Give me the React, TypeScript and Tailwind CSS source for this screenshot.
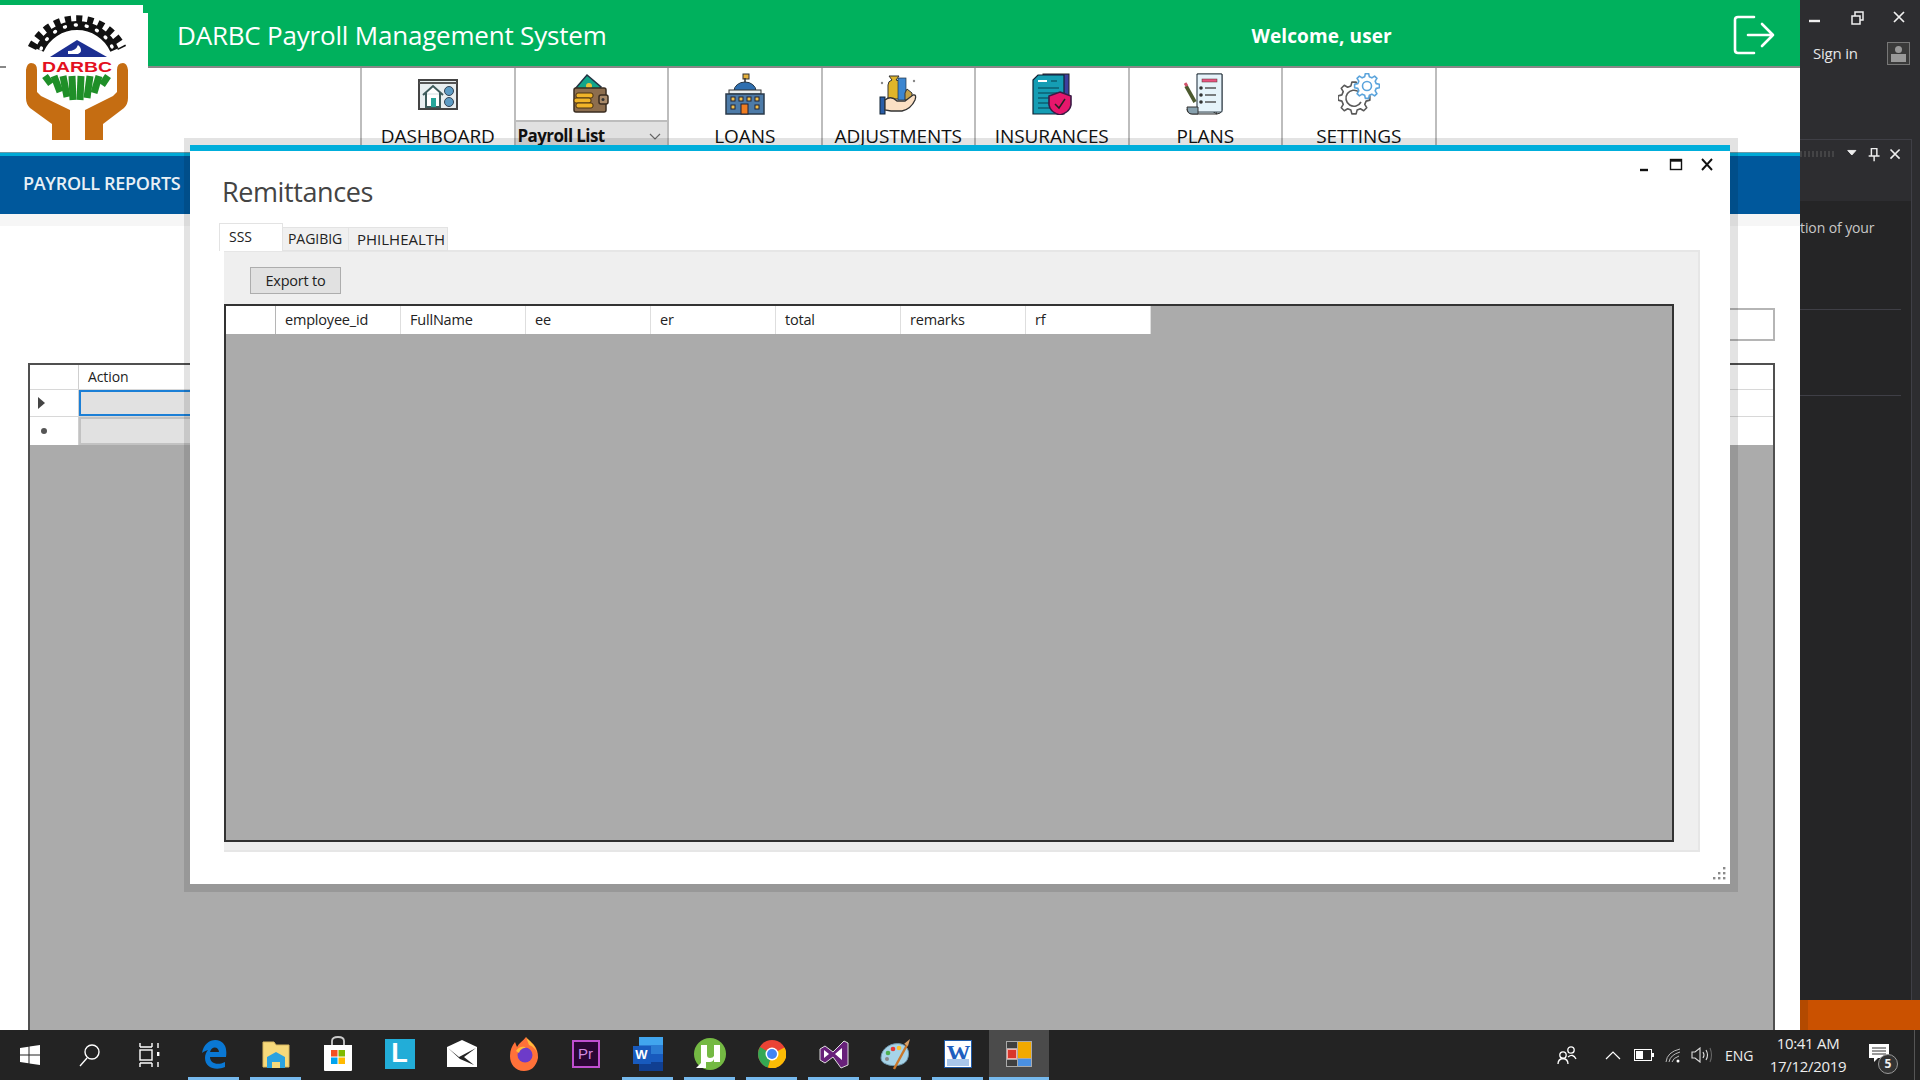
import React from "react";

const ui = "font-['Open_Sans',_'Noto_Sans',_sans-serif]";

// outline of a cog, used by the settings icon
function gearPath(cx: number, cy: number, R: number, r: number, n: number) {
    const pts: string[] = [];
    for (let i = 0; i < n; i++) {
        const step = (Math.PI * 2) / n;
        const a = i * step;
        const at = (rad: number, ang: number) => `${(cx + rad * Math.cos(ang)).toFixed(2)} ${(cy + rad * Math.sin(ang)).toFixed(2)}`;
        pts.push(at(r, a - step * 0.32), at(R, a - step * 0.17), at(R, a + step * 0.17), at(r, a + step * 0.32));
    }
    return "M" + pts.join(" L") + " Z";
}

function Logo() {
    return (
        <svg width="148" height="150" viewBox="0 0 148 150" className="block">
            <path d="M32 48 A50 50 0 0 1 122 48" fill="none" stroke="#111" strokeWidth="9" strokeDasharray="6 5" />
            <path d="M39.5 50 A41 41 0 0 1 114.5 50" fill="none" stroke="#111" strokeWidth="9" />
            <path d="M41 49 A39 39 0 0 1 113 49" fill="none" stroke="#fff" strokeWidth="3.4" strokeLinecap="round" strokeDasharray="1 10" />
            <path d="M50 57 L77 40 L107 57 Z" fill="#1c2f92" />
            <path d="M68 51 Q76 51 78 45 L80 47 Q83 52 78 54 L68 54 Z" fill="#fff" />
            <text x="77" y="72" textAnchor="middle" fontFamily="Liberation Sans" fontWeight="700" fontSize="14.5" textLength="70" lengthAdjust="spacingAndGlyphs" fill="#e3101e">
                DARBC
            </text>
            <g fill="none" stroke="#1f8f28" strokeWidth="7">
                <path d="M45 76 L51 84" />
                <path d="M54 76 L60 92" />
                <path d="M63 76 L67 97" />
                <path d="M72 76 L73 100" />
                <path d="M81 76 L80 100" />
                <path d="M90 76 L87 98" />
                <path d="M99 76 L94 93" />
                <path d="M108 76 L102 85" />
            </g>
            <path d="M26 70 Q27 63 31 63 Q37 63 37 70 L37 92 L41 96 L70 110 L70 140 L52 140 L52 124 L30 108 Q26 104 26 98 Z" fill="#c56d12" />
            <path d="M128 70 Q127 63 123 63 Q117 63 117 70 L117 92 L113 96 L85 110 L85 140 L103 140 L103 124 L124 108 Q128 104 128 98 Z" fill="#c56d12" />
        </svg>
    );
}

function DashboardIcon() {
    return (
        <svg width="40" height="42" viewBox="0 0 40 42">
            <rect x="1" y="7" width="38" height="29" fill="#e8eef0" stroke="#444" strokeWidth="2" />
            <path d="M1 10 H39" stroke="#555" strokeWidth="2" />
            <path d="M5 22 L15 13 L25 22 M8 20 V34 H22 V20" fill="#fff" stroke="#3d5a5a" strokeWidth="2" />
            <rect x="13" y="25" width="5" height="9" fill="#26a69a" />
            <circle cx="31" cy="18" r="4.5" fill="#5c9bc4" stroke="#345" strokeWidth="1" />
            <circle cx="31" cy="29" r="4.5" fill="#5c9bc4" stroke="#345" strokeWidth="1" />
        </svg>
    );
}

function WalletIcon() {
    return (
        <svg width="40" height="42" viewBox="0 0 40 42">
            <path d="M4 16 L16 2 L30 14 L26 20 H6 Z" fill="#12a58a" stroke="#234" strokeWidth="1.5" />
            <circle cx="18" cy="13" r="3" fill="#e8c23a" />
            <rect x="3" y="15" width="32" height="24" rx="2" fill="#8d6e4e" stroke="#3a2c20" strokeWidth="1.5" />
            <rect x="28" y="22" width="9" height="9" rx="2" fill="#a98a6a" stroke="#3a2c20" strokeWidth="1.5" />
            <circle cx="32" cy="26.5" r="1.5" fill="#333" />
            <rect x="5" y="20" width="17" height="5" rx="2" fill="#f0b429" stroke="#4a3212" />
            <rect x="3" y="25" width="17" height="5" rx="2" fill="#f0b429" stroke="#4a3212" />
            <rect x="5" y="30" width="17" height="5" rx="2" fill="#f0b429" stroke="#4a3212" />
        </svg>
    );
}

function LoansIcon() {
    return (
        <svg width="42" height="42" viewBox="0 0 42 42">
            <rect x="19" y="1" width="6" height="5" fill="#e6b13c" stroke="#333" />
            <path d="M21 5 V10" stroke="#333" strokeWidth="1.5" />
            <path d="M10 18 A11 9 0 0 1 32 18 Z" fill="#2f6fb0" stroke="#234" />
            <rect x="5" y="17" width="32" height="4" fill="#e8edf0" stroke="#333" />
            <rect x="2" y="21" width="38" height="20" fill="#4d7ba8" stroke="#2a3a4a" strokeWidth="1.5" />
            <g fill="#f1c04c" stroke="#223">
                <rect x="7" y="24" width="4" height="4" />
                <rect x="15" y="24" width="4" height="4" />
                <rect x="23" y="24" width="4" height="4" />
                <rect x="31" y="24" width="4" height="4" />
                <rect x="7" y="32" width="4" height="4" />
                <rect x="31" y="32" width="4" height="4" />
            </g>
            <rect x="17" y="31" width="7" height="10" fill="#ef7d22" stroke="#223" />
        </svg>
    );
}

function AdjustmentsIcon() {
    return (
        <svg width="40" height="42" viewBox="0 0 40 42">
            <path d="M10 26 V12 Q10 8 14 7 L11 3 H21 L18 7 Q23 8 23 12 V26 Z" fill="#e0b52a" stroke="#333" />
            <rect x="20" y="5" width="8" height="22" fill="#3c86d0" stroke="#234" strokeWidth="0.7" />
            <path d="M29 16 L34 20 V27 H27 V20 Z" fill="#c7a247" stroke="#333" />
            <circle cx="4" cy="10" r="1.2" fill="#888" />
            <circle cx="36" cy="8" r="1.2" fill="#888" />
            <rect x="2" y="24" width="5" height="17" fill="#2a5ea8" stroke="#123" />
            <path d="M7 27 Q13 22 19 28 H27 L35 22 Q39 21 37 27 Q33 36 24 38 H13 L7 37 Z" fill="#fbe0c4" stroke="#333" strokeWidth="1.3" />
        </svg>
    );
}

function InsurancesIcon() {
    return (
        <svg width="42" height="42" viewBox="0 0 42 42">
            <rect x="12" y="1" width="26" height="34" fill="#3d3f9e" stroke="#222" />
            <path d="M2 7 L7 2 H33 V41 H2 Z" fill="#159db4" stroke="#123" strokeWidth="1.2" />
            <path d="M7 8 H16 M20 8 H26 M7 15 H28 M7 20 H26 M7 25 H26 M7 30 H22 M7 35 H24" stroke="#0c5f70" strokeWidth="1.5" />
            <path d="M7 8 H16" stroke="#fff" strokeWidth="2" />
            <path d="M29 19 L40 23 V32 Q39 39 29 42 Q19 39 18 32 V23 Z" fill="#e6176c" stroke="#3b1b46" strokeWidth="1.6" />
            <path d="M24 31 L28 35 L34 26" fill="none" stroke="#222" strokeWidth="1.5" />
        </svg>
    );
}

function PlansIcon() {
    return (
        <svg width="42" height="42" viewBox="0 0 42 42">
            <path d="M13 1 H38 V37 Q37 41 33 41 H9 Q3 41 3 36 H28 V38 L33 41 Z" fill="#cfd8dc" stroke="#333" />
            <rect x="13" y="1" width="25" height="38" rx="1" fill="#e6f3fa" stroke="#3b4a55" strokeWidth="1.2" />
            <rect x="18" y="6" width="15" height="3" fill="#e75480" stroke="#533" strokeWidth="0.5" />
            <path d="M21 15 H32 M21 22 H32 M21 29 H32" stroke="#555" strokeWidth="1.6" />
            <circle cx="17" cy="15" r="1.8" fill="#333" />
            <circle cx="17" cy="22" r="1.8" fill="#333" />
            <circle cx="17" cy="29" r="1.8" fill="#333" />
            <path d="M2 13 L11 29" stroke="#4c5a2f" strokeWidth="3.6" />
            <path d="M1 10 L3 13" stroke="#d0506a" strokeWidth="3" />
            <path d="M3 34 H14 V41 H8 Q3 41 3 34 Z" fill="#87a0ad" stroke="#333" />
        </svg>
    );
}

function SettingsIcon() {
    return (
        <svg width="42" height="42" viewBox="0 0 42 42" fill="none">
            <path d={gearPath(16, 25, 16, 12.5, 8)} stroke="#5a5a5a" strokeWidth="1.6" strokeLinejoin="round" />
            <path d="M21 19 A8 8 0 1 0 23 29" stroke="#5a5a5a" strokeWidth="1.6" />
            <path d={gearPath(29, 13, 12.5, 9.5, 8)} fill="#fff" stroke="#5ba4dc" strokeWidth="1.6" strokeLinejoin="round" />
            <circle cx="29" cy="13" r="4.5" stroke="#5ba4dc" strokeWidth="1.6" />
        </svg>
    );
}

function LogoutIcon() {
    return (
        <svg width="42" height="41" viewBox="0 0 42 41" fill="none" stroke="#fff" strokeWidth="2.6" strokeLinecap="round" strokeLinejoin="round">
            <path d="M21 2 H5 Q2 2 2 5 V35 Q2 38 5 38 H21" />
            <path d="M15 20 H40 M29 9 L40 20 L29 31" />
        </svg>
    );
}

const navItems = [
    { label: "DASHBOARD", icon: <DashboardIcon /> },
    { label: "", icon: <WalletIcon /> },
    { label: "LOANS", icon: <LoansIcon /> },
    { label: "ADJUSTMENTS", icon: <AdjustmentsIcon /> },
    { label: "INSURANCES", icon: <InsurancesIcon /> },
    { label: "PLANS", icon: <PlansIcon /> },
    { label: "SETTINGS", icon: <SettingsIcon /> },
];

function NavBar() {
    return (
        <div className="flex h-[84px] pl-[360px] bg-white overflow-hidden">
            <div className="flex border-l-2 border-[#bdbdbd]">
                {navItems.map((item, i) => (
                    <div key={i} className="w-[153.5px] h-full border-r-2 border-[#bdbdbd] flex flex-col items-center pt-[5px]">
                        <div className="h-[42px]">{item.icon}</div>
                        {item.label ? (
                            <div className={`${ui} mt-[9px] text-[19px] leading-[24px] text-[#111] tracking-[-0.1px]`}>{item.label}</div>
                        ) : (
                            <div className="mt-[5px] w-full h-[30px] bg-[#e1e1e1] border-t-2 border-[#bdbdbd] flex items-start justify-between pl-[2px] pr-[6px] pt-[2px]">
                                <span className={`${ui} text-[17px] leading-[24px] font-bold text-[#111] tracking-[-0.6px]`}>Payroll List</span>
                                <svg width="12" height="8" viewBox="0 0 12 8" fill="none" stroke="#666" strokeWidth="1.2" className="mt-[9px]">
                                    <path d="M1 1 L6 6 L11 1" />
                                </svg>
                            </div>
                        )}
                    </div>
                ))}
            </div>
        </div>
    );
}

function BackgroundGrid() {
    return (
        <div className="flex-1 flex flex-col bg-white px-[28px] pr-[25px] pt-[12px] relative">
            <div className="h-[12px] bg-[#f6f6f6] absolute left-0 right-0 top-0" />
            <div className="flex justify-end h-[33px] mt-[82px] mb-[22px]">
                <div className="w-[300px] border-2 border-[#b5b5b5] bg-white" />
            </div>
            <div className="flex-1 border-2 border-b-0 border-[#505050] bg-[#ababab]">
                <div className="flex h-[25px] bg-white border-b border-[#d8d8d8]">
                    <div className="w-[49px] border-r border-[#cfcfcf]" />
                    <div className={`${ui} pl-[9px] text-[14px] leading-[24px] text-[#222] tracking-[-0.1px]`}>Action</div>
                </div>
                <div className="flex h-[27px] bg-white border-b border-[#d8d8d8]">
                    <div className="w-[49px] border-r border-[#cfcfcf] flex items-center pl-[8px]">
                        <div className="w-0 h-0 border-y-[6px] border-y-transparent border-l-[7px] border-l-[#444]" />
                    </div>
                    <div className="w-[600px] bg-[#e1e1e1] border-2 border-[#1b7fd6]" />
                </div>
                <div className="flex h-[28px] bg-white">
                    <div className="w-[49px] border-r border-[#cfcfcf] flex items-center pl-[11px]">
                        <div className="w-[6px] h-[6px] rounded-full bg-[#555]" />
                    </div>
                    <div className="w-[600px] bg-[#e1e1e1] border-2 border-[#c2c2c2]" />
                </div>
            </div>
        </div>
    );
}

const columns = ["employee_id", "FullName", "ee", "er", "total", "remarks", "rf"];

function RemittancesWindow() {
    return (
        <div className="absolute left-[184px] top-[138px] w-[1554px] h-[754px] bg-black/[0.11] p-[6px] pt-[7px] pr-[8px] pb-[8px] z-20">
            <div className="relative w-full h-full bg-white border-t-[6px] border-[#00aedb] flex flex-col pl-[29px] pr-[32px]">
                <div className="absolute right-[15px] top-[6px] flex items-center gap-[15px]">
                    <svg width="16" height="16" viewBox="0 0 16 16"><path d="M3 13 H11" stroke="#111" strokeWidth="2.4" /></svg>
                    <svg width="16" height="16" viewBox="0 0 16 16" fill="none"><rect x="2.5" y="2.5" width="11" height="10" stroke="#111" strokeWidth="1.4" /><path d="M2 3.5 H14" stroke="#111" strokeWidth="2.4" /></svg>
                    <svg width="16" height="16" viewBox="0 0 16 16"><path d="M3 2 L13 13 M13 2 L3 13" stroke="#111" strokeWidth="1.9" /></svg>
                </div>
                <h1 className={`${ui} mt-[22px] ml-[3px] text-[27px] leading-[38px] font-normal text-[#444] tracking-[-0.4px]`}>Remittances</h1>
                <div className="flex mt-[12px] items-end h-[28px] z-10 -mb-[1px]">
                    <div className={`${ui} w-[64px] h-[28px] bg-white border border-b-0 border-[#e3e3e3] pl-[9px] pt-[2px] text-[14px] leading-[22px] text-[#222]`}>SSS</div>
                    <div className={`${ui} w-[66px] h-[24px] bg-[#f0f0f0] border border-l-0 border-[#e3e3e3] pl-[5px] text-[14px] leading-[22px] text-[#222] tracking-[-0.05px]`}>PAGIBIG</div>
                    <div className={`${ui} w-[99px] h-[24px] bg-[#f0f0f0] border border-l-0 border-[#e3e3e3] pl-[8px] text-[15px] leading-[22px] text-[#222]`}>PHILHEALTH</div>
                </div>
                <div className="ml-[5px] w-[1476px] h-[602px] bg-[#efefef] border-2 border-l-0 border-[#e6e6e6] flex flex-col pl-[26px] pr-[24px] pt-[15px]">
                    <button className={`${ui} w-[91px] h-[27px] bg-[#e1e1e1] border border-[#adadad] text-[14.5px] text-[#222] tracking-[-0.2px]`}>Export to</button>
                    <div className="-ml-[26px] mt-[10px] h-[538px] border-2 border-[#333] bg-[#ababab]">
                        <div className="flex h-[28px] w-fit bg-white">
                            <div className="w-[50px] border-r border-[#b5b5b5]" />
                            {columns.map((c) => (
                                <div key={c} className={`${ui} w-[125px] border-r border-[#dedede] pl-[9px] text-[14.5px] leading-[27px] text-[#222] tracking-[-0.2px]`}>
                                    {c}
                                </div>
                            ))}
                        </div>
                    </div>
                </div>
                <svg width="14" height="14" viewBox="0 0 14 14" fill="#8a8a8a" className="absolute right-[4px] bottom-[4px]">
                    <rect x="11" y="1" width="2.4" height="2.4" />
                    <rect x="6" y="6" width="2.4" height="2.4" />
                    <rect x="11" y="6" width="2.4" height="2.4" />
                    <rect x="1" y="11" width="2.4" height="2.4" />
                    <rect x="6" y="11" width="2.4" height="2.4" />
                    <rect x="11" y="11" width="2.4" height="2.4" />
                </svg>
            </div>
        </div>
    );
}

function SidePanel() {
    return (
        <div className="w-[120px] bg-[#2d2d30] flex flex-col relative">
            <div className="h-[139px] flex flex-col">
                <div className="h-[34px] flex items-center text-[#e8e8e8]">
                    <svg width="120" height="34" viewBox="0 0 120 34" fill="none" stroke="#f0f0f0">
                        <path d="M9 21 H20" strokeWidth="2.4" />
                        <path d="M52 16 H60 V24 H52 Z M55 16 V12 H63 V20 H60" strokeWidth="1.5" />
                        <path d="M94 12 L104 22 M104 12 L94 22" strokeWidth="1.7" />
                    </svg>
                </div>
                <div className="flex items-center mt-[5px] pl-[13px]">
                    <span className={`${ui} text-[15px] leading-[28px] text-[#e6e6e6] tracking-[-0.2px]`}>Sign in</span>
                    <div className="ml-[29px] w-[23px] h-[23px] border border-[#777] bg-[#3a3a3a] flex flex-col items-center pt-[3px]">
                        <div className="w-[7px] h-[7px] rounded-full bg-[#999]" />
                        <div className="w-[15px] h-[8px] bg-[#999] mt-[1px]" />
                    </div>
                </div>
            </div>
            <div className="flex-1 border-t border-r border-[#3f3f46] mr-[8px] flex flex-col">
                <div className="h-[61px] flex items-start pt-[5px]">
                    <div className="w-[39px] h-[6px] mt-[6px] opacity-40 bg-[repeating-linear-gradient(90deg,#666_0,#666_2px,transparent_2px,transparent_4px)]" />
                    <svg width="72" height="20" viewBox="0 0 72 20" fill="none" stroke="#eee" className="ml-[10px]">
                        <path d="M3 5 L12 5 L7.5 10 Z" fill="#eee" />
                        <path d="M29 3 H35 V11 H29 Z M26 11 H38 M32 11 V17" strokeWidth="1.6" />
                        <path d="M50 4 L60 14 M60 4 L50 14" strokeWidth="1.8" />
                    </svg>
                </div>
                <div className="flex-1 bg-[#252526] flex flex-col">
                    <div className={`${ui} h-[108px] pt-[17px] text-[14px] leading-[20px] text-[#c8c8c8] whitespace-nowrap overflow-hidden tracking-[-0.1px]`}>tion of your</div>
                    <div className="h-[86px] border-t border-[#3f3f46] mr-[10px]" />
                    <div className="border-t border-[#3f3f46] mr-[10px]" />
                </div>
            </div>
            <div className="h-[30px] bg-[#ca5100] flex">
                <div className="w-[8px] bg-[#b34a00]" />
            </div>
        </div>
    );
}

function IconWin() {
    return <svg width="22" height="22" viewBox="0 0 22 22" fill="#fff"><path d="M1 4 L9.5 2.8 V10.5 H1 Z M10.5 2.6 L21 1 V10.5 H10.5 Z M1 11.5 H9.5 V19.2 L1 18 Z M10.5 11.5 H21 V21 L10.5 19.4 Z" /></svg>;
}
function IconSearch() {
    return <svg width="22" height="24" viewBox="0 0 22 24" fill="none" stroke="#fff" strokeWidth="1.4"><circle cx="13" cy="9" r="7" /><path d="M8 15 L1 23" /></svg>;
}
function IconTaskView() {
    return <svg width="22" height="26" viewBox="0 0 22 26" fill="none" stroke="#fff" strokeWidth="1.4"><path d="M1 5 H13 M1 21 H13 M1 1 V5 M13 1 V5 M1 21 V25 M13 21 V25" /><rect x="1" y="8" width="12" height="10" /><path d="M19 1 V6 M19 20 V25" /><rect x="18" y="10" width="2.4" height="4" fill="#fff" stroke="none" /></svg>;
}
function IconEdge() {
    return <svg width="26" height="30" viewBox="0 0 26 30"><path d="M1 14 C3 3 12 -1 19 2 C25 5 26 11 25 18 H9 C9 24 16 27 24 23 V28 C15 32 4 29 4 19 C4 16 5 13 7 11 C4 12 2 13 1 14 Z M9 13 H18 C18 8 11 6 9 13 Z" fill="#0a78d4" fillRule="evenodd" /></svg>;
}
function IconFolder() {
    return <svg width="28" height="30" viewBox="0 0 28 30"><path d="M1 3 H12 L14 6 H27 V28 H1 Z" fill="#f6d97b" stroke="#d8b860" /><path d="M5 29 V18 L14 13 L23 18 V29 H18 V23 H10 V29 Z" fill="#2aa2e0" /><rect x="10" y="23" width="8" height="6" fill="#f6d97b" /></svg>;
}
function IconStore() {
    return <svg width="30" height="36" viewBox="0 0 30 36"><path d="M9 10 V5 Q9 1 15 1 Q21 1 21 5 V10" fill="none" stroke="#ccc" strokeWidth="1.8" /><path d="M1 9 H29 V34 Q29 35 28 35 H2 Q1 35 1 34 Z" fill="#fff" /><rect x="8" y="14" width="6.5" height="6.5" fill="#f25022" /><rect x="15.5" y="14" width="6.5" height="6.5" fill="#7fba00" /><rect x="8" y="21.5" width="6.5" height="6.5" fill="#00a4ef" /><rect x="15.5" y="21.5" width="6.5" height="6.5" fill="#ffb900" /></svg>;
}
function IconL() {
    return <div className="w-[30px] h-[30px] bg-[#22add8] flex items-center justify-center"><span className="font-['Liberation_Sans'] font-bold text-[27px] leading-none text-white">L</span></div>;
}
function IconMail() {
    return <svg width="30" height="30" viewBox="0 0 30 30"><path d="M0 8 L15 1 L30 8 V28 H0 Z" fill="#fff" /><path d="M1 9 L12 18 L29 9 L17 18 L27 26 L13 20 Z" fill="#232323" /></svg>;
}
function IconFirefox() {
    return <svg width="30" height="36" viewBox="0 0 30 36"><path d="M15 35 C6 35 1 28 1 20 C1 14 3 10 6 6 L8 11 C10 7 14 5 17 1 C19 5 24 6 27 12 C29 16 29 20 29 22 C27 31 22 35 15 35 Z" fill="#ff7139" /><path d="M17 1 C20 5 26 7 29 20 C27 12 23 10 20 9 Z" fill="#ffbd3a" /><circle cx="16" cy="19" r="7.5" fill="#6d3bc9" /><path d="M7 15 C10 10 15 10 17 12 C13 12 11 14 10 17 Z" fill="#ffbd3a" /></svg>;
}
function IconPr() {
    return <div className="w-[28px] h-[28px] bg-[#2a0634] border-2 border-[#c04fd0] flex items-center justify-center"><span className="font-['Liberation_Sans'] text-[15px] leading-none text-[#d38be0]">Pr</span></div>;
}
function IconWord() {
    return (
        <div className="relative w-[30px] h-[34px]">
            <div className="absolute left-[6px] top-0 w-[24px] h-[34px] flex flex-col">
                <div className="flex-1 bg-[#41a5ee]" />
                <div className="flex-1 bg-[#2b7cd3]" />
                <div className="flex-1 bg-[#185abd]" />
                <div className="flex-1 bg-[#103f91]" />
            </div>
            <div className="absolute left-0 top-[9px] w-[18px] h-[18px] bg-[#185abd] flex items-center justify-center font-['Liberation_Sans'] font-bold text-[13px] leading-none text-white">W</div>
        </div>
    );
}
function IconTorrent() {
    return <svg width="34" height="34" viewBox="0 0 34 34"><circle cx="17" cy="17" r="16" fill="#74b943" /><path d="M8 8 V26 L3 31 H13 V25 Q15 25 17 25 Q20 25 21 22 V25 H27 V8 H21 V19 Q20 21 17 21 Q14 21 14 18 V8 Z" fill="#fff" /></svg>;
}
function IconChrome() {
    return <svg width="28" height="28" viewBox="0 0 28 28"><circle cx="14" cy="14" r="14" fill="#ea4335" /><path d="M14 14 L2 7 A14 14 0 0 0 10 27.5 Z" fill="#34a853" /><path d="M14 14 L26.5 7.5 A14 14 0 0 1 10 27.5 Z" fill="#fbbc05" /><circle cx="14" cy="14" r="6.5" fill="#fff" /><circle cx="14" cy="14" r="5" fill="#4285f4" /></svg>;
}
function IconVS() {
    return <svg width="30" height="30" viewBox="0 0 30 30"><path d="M1 10 L6 7 L14 13 L25 2 L29 4 V26 L22 29 L14 18 L6 24 L1 21 Z" fill="#68217a" stroke="#ddd" strokeWidth="1" /><path d="M5 11 L10 15 L5 19 Z M23 9 L16 15 L23 21 Z" fill="#fff" /></svg>;
}
function IconPaint() {
    return <svg width="32" height="32" viewBox="0 0 32 32"><path d="M1 20 C1 10 12 4 21 6 C29 8 30 16 27 22 C24 28 12 29 6 26 C3 25 1 23 1 20 Z" fill="#a6d3e8" stroke="#6f98ad" /><circle cx="8" cy="15" r="2.3" fill="#4caf50" /><circle cx="13" cy="11" r="2.3" fill="#e53935" /><circle cx="19" cy="10" r="2.3" fill="#fbc02d" /><circle cx="7" cy="21" r="2" fill="#888" /><path d="M14 31 L27 7" stroke="#c9772a" strokeWidth="2.4" /><path d="M24 6 L30 1 L28 8 Z" fill="#d9a066" /></svg>;
}
function IconWord2() {
    return (
        <div className="relative w-[28px] h-[28px] bg-white border border-[#1f5aa8] overflow-hidden">
            <span className="absolute left-[2px] top-0 font-['Liberation_Serif'] font-bold text-[24px] leading-none text-[#1f5fbf]">W</span>
            <div className="absolute left-[2px] bottom-[1px] w-[22px] h-[7px] bg-[#a9c6ea]" />
        </div>
    );
}
function IconApp() {
    return (
        <div className="w-[26px] h-[26px] border border-[#aaa] flex gap-[1px] bg-[#aaa]">
            <div className="w-[10px] flex flex-col gap-[1px]">
                <div className="h-[6px] bg-[#3f3f3f]" />
                <div className="flex-1 bg-[#d9372c] border border-[#f3b0aa]" />
                <div className="h-[6px] bg-[#3f3f3f]" />
            </div>
            <div className="flex-1 flex flex-col gap-[1px]">
                <div className="flex-1 bg-[#f1a900]" />
                <div className="h-[7px] bg-[#4a90e2]" />
            </div>
        </div>
    );
}

const taskItems = [
    { icon: <IconEdge />, cls: "w-[51px] mr-[11px] border-[#76b9ed]" },
    { icon: <IconFolder />, cls: "w-[51px] mr-[11px] border-[#76b9ed]" },
    { icon: <IconStore />, cls: "w-[51px] mr-[11px] border-transparent" },
    { icon: <IconL />, cls: "w-[51px] mr-[11px] border-transparent" },
    { icon: <IconMail />, cls: "w-[51px] mr-[11px] border-transparent" },
    { icon: <IconFirefox />, cls: "w-[51px] mr-[11px] border-transparent" },
    { icon: <IconPr />, cls: "w-[51px] mr-[11px] border-transparent" },
    { icon: <IconWord />, cls: "w-[51px] mr-[11px] border-[#76b9ed]" },
    { icon: <IconTorrent />, cls: "w-[51px] mr-[11px] border-[#76b9ed]" },
    { icon: <IconChrome />, cls: "w-[51px] mr-[11px] border-[#76b9ed]" },
    { icon: <IconVS />, cls: "w-[51px] mr-[11px] border-[#76b9ed]" },
    { icon: <IconPaint />, cls: "w-[51px] mr-[11px] border-[#76b9ed]" },
    { icon: <IconWord2 />, cls: "w-[51px] mr-[6px] border-[#76b9ed]" },
    { icon: <IconApp />, cls: "w-[60px] bg-[#4b4b4b] border-[#76b9ed]" },
];

function Taskbar() {
    return (
        <div className="h-[50px] bg-[#232323] flex items-stretch text-white">
            <div className="w-[60px] flex items-center justify-center"><IconWin /></div>
            <div className="w-[60px] flex items-center justify-center"><IconSearch /></div>
            <div className="w-[60px] flex items-center justify-center"><IconTaskView /></div>
            <div className="w-[8px]" />
            {taskItems.map((t, i) => (
                <div key={i} className={`${t.cls} h-full border-b-[3px] flex items-center justify-center`}>{t.icon}</div>
            ))}
            <div className="flex-1" />
            <div className="flex items-center">
                <svg width="20" height="20" viewBox="0 0 20 20" fill="none" stroke="#fff" strokeWidth="1.3" className="mr-[28px]">
                    <circle cx="6" cy="10" r="3.2" />
                    <circle cx="14" cy="5" r="3.2" />
                    <path d="M1 19 Q1 14 6 13.5 Q11 14 11 19 M11 12 Q16 8 19 14" />
                </svg>
                <svg width="16" height="10" viewBox="0 0 16 10" fill="none" stroke="#fff" strokeWidth="1.2" className="mr-[13px]"><path d="M1 9 L8 2 L15 9" /></svg>
                <svg width="20" height="12" viewBox="0 0 20 12" className="mr-[11px]"><rect x="0.5" y="0.5" width="17" height="11" fill="none" stroke="#fff" /><rect x="2" y="2" width="7" height="8" fill="#fff" /><rect x="18" y="4" width="2" height="4" fill="#fff" /></svg>
                <svg width="16" height="16" viewBox="0 0 16 16" fill="none" stroke="#bbb" strokeWidth="1" className="mr-[10px]"><path d="M1 15 Q2 5 15 2 M4 15 Q5 8 15 5 M7 15 Q8 11 14 9" /><circle cx="13" cy="14" r="1.5" fill="#fff" stroke="none" /></svg>
                <svg width="22" height="16" viewBox="0 0 22 16" fill="none" stroke="#ddd" strokeWidth="1.1" className="mr-[12px]"><path d="M1 5 H4 L9 1 V15 L4 11 H1 Z" /><path d="M12 5 Q14 8 12 11 M15 3 Q18 8 15 13" /><path d="M19 1 Q22 8 19 15" stroke="#666" /></svg>
                <span className={`${ui} text-[14px] text-[#eee] w-[28px] mr-[11px] whitespace-nowrap`}>ENG</span>
                <div className={`${ui} w-[88px] text-center text-[15px] leading-[23px] text-[#eee] tracking-[-0.3px] whitespace-nowrap`}>
                    <div>10:41 AM</div>
                    <div>17/12/2019</div>
                </div>
                <div className="relative w-[62px] h-full flex items-center justify-center">
                    <svg width="20" height="20" viewBox="0 0 20 20" fill="#fff" className="-mt-[4px] -ml-[8px]">
                        <path d="M0 1 H20 V15 H9 L5 19 V15 H0 Z" />
                        <path d="M3 5 H17 M3 8 H17 M3 11 H17" stroke="#333" strokeWidth="1" />
                    </svg>
                    <div className="absolute left-[26px] top-[24px] w-[20px] h-[20px] rounded-full bg-[#333] border border-[#999] text-center text-[12px] leading-[18px] font-bold text-[#eee] font-['Open_Sans']">5</div>
                </div>
                <div className="w-[1px] h-full bg-[#555] mr-[5px]" />
            </div>
        </div>
    );
}

export default function App() {
    return (
        <div className="w-[1920px] h-[1080px] overflow-hidden relative flex flex-col bg-white">
            <div className="flex flex-1 min-h-0">
                <div className="w-[1800px] flex flex-col relative">
                    <div className="h-[68px] bg-[#00b15d] border-b-2 border-[#888] flex items-center pl-[177px] pr-[25px] pt-[4px]">
                        <span className={`${ui} text-[26px] font-normal text-white tracking-[-0.2px]`}>DARBC Payroll Management System</span>
                        <span className={`${ui} ml-[645px] pt-[2px] text-[19px] font-bold text-white tracking-[0.1px]`}>Welcome, user</span>
                        <div className="ml-auto pt-[1px]"><LogoutIcon /></div>
                    </div>
                    <div className="absolute left-0 top-[5px] w-[143px] h-[8px] bg-white z-10" />
                    <div className="absolute left-0 top-[13px] w-[148px] h-[137px] bg-white z-10">
                        <div className="absolute left-0 top-[53px] w-[6px] h-[2px] bg-[#888]" />
                        <div className="-mt-[13px]"><Logo /></div>
                    </div>
                    <NavBar />
                    <div className="h-[4px] bg-[#00a9d6] border-t border-[#6a9aa8]" />
                    <div className="h-[58px] bg-[#00589c] flex items-center pl-[23px] pb-[4px]">
                        <span className={`${ui} text-[18px] font-semibold text-[#e8f0f6] tracking-[-0.3px]`}>PAYROLL REPORTS</span>
                    </div>
                    <BackgroundGrid />
                </div>
                <SidePanel />
            </div>
            <Taskbar />
            <RemittancesWindow />
        </div>
    );
}
